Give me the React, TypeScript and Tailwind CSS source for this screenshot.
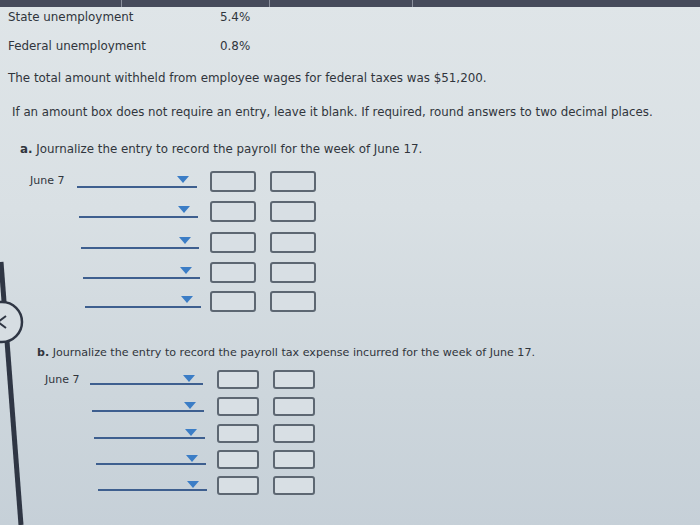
import React from "react";

const Tri = () => (
  <svg width="12" height="7" viewBox="0 0 12 7" className="block">
    <polygon points="0,0 12,0 6,7" fill="#3b7dc6" />
  </svg>
);

type RowProps = {
  label?: string;
  lineStart: number;
  lineWidth: number;
  boxStart: number;
  boxW: number;
  boxH: number;
  gap: number;
  lineH: number;
  rowH: number;
};

function Row({ label, lineStart, lineWidth, boxStart, boxW, boxH, gap, lineH, rowH }: RowProps) {
  return (
    <div className="flex items-start" style={{ height: rowH }}>
      <div className="flex items-start shrink-0" style={{ width: boxStart }}>
        <div className="shrink-0 pt-[3px] whitespace-nowrap" style={{ width: lineStart }}>
          {label}
        </div>
        <div
          className="flex justify-end items-start pr-[8px] pt-[5px] border-b-2 border-[#3e5f8f] shrink-0"
          style={{ width: lineWidth, height: lineH }}
        >
          <Tri />
        </div>
      </div>
      <div
        className="shrink-0 rounded-[3px] border-2 border-[#5d6772] bg-[#d8dfe4]"
        style={{ width: boxW, height: boxH }}
      />
      <div
        className="shrink-0 rounded-[3px] border-2 border-[#5d6772] bg-[#d8dfe4]"
        style={{ width: boxW, height: boxH, marginLeft: gap }}
      />
    </div>
  );
}

export default function App() {
  const rowsA = [
    { label: "June 7", lineStart: 47, lineWidth: 120, rowH: 30 },
    { lineStart: 49, lineWidth: 119, rowH: 31 },
    { lineStart: 51, lineWidth: 118, rowH: 30 },
    { lineStart: 53, lineWidth: 117, rowH: 29 },
    { lineStart: 55, lineWidth: 116, rowH: 30 },
  ];
  const rowsB = [
    { label: "June 7", lineStart: 45, lineWidth: 113, rowH: 27 },
    { lineStart: 47, lineWidth: 112, rowH: 27 },
    { lineStart: 49, lineWidth: 111, rowH: 26 },
    { lineStart: 51, lineWidth: 110, rowH: 26 },
    { lineStart: 53, lineWidth: 109, rowH: 26 },
  ];
  return (
    <div
      className="relative w-[700px] h-[525px] overflow-hidden text-[#30353c] bg-[linear-gradient(180deg,#dfe5e8_0%,#d9e0e4_40%,#cdd6dc_75%,#c6d0d8_100%)]"
      style={{ fontFamily: '"DejaVu Sans", Verdana, sans-serif' }}
    >
      {/* top monitor strip */}
      <div className="flex h-[7px] bg-[#464b5b]">
        <div className="w-[122px] border-r border-[#8a8f9c]" />
        <div className="w-[148px] border-r border-[#8a8f9c]" />
        <div className="w-[143px] border-r border-[#8a8f9c]" />
        <div className="flex-1" />
      </div>

      <div className="pl-[8px] text-[11.9px] leading-[16px]">
        <div className="flex mt-[2px]">
          <span className="w-[212px]">State unemployment</span>
          <span>5.4%</span>
        </div>
        <div className="flex mt-[13px]">
          <span className="w-[212px]">Federal unemployment</span>
          <span>0.8%</span>
        </div>
        <div className="mt-[16px]">The total amount withheld from employee wages for federal taxes was $51,200.</div>
      </div>
      <div className="pl-[12px] mt-[18px] text-[11.8px] leading-[16px]">
        If an amount box does not require an entry, leave it blank. If required, round answers to two decimal places.
      </div>

      <div className="pl-[20px] mt-[22px] text-[11.85px] leading-[15px]">
        <span className="font-bold">a.</span> Journalize the entry to record the payroll for the week of June 17.
      </div>
      <div className="pl-[30px] mt-[14px] text-[11px] leading-[14px]">
        {rowsA.map((r, i) => (
          <Row key={i} {...r} boxStart={180} boxW={46} boxH={21} gap={14} lineH={17} />
        ))}
      </div>

      <div className="pl-[37px] mt-[25px] text-[11.1px] leading-[14px]">
        <span className="font-bold">b.</span> Journalize the entry to record the payroll tax expense incurred for the week of June 17.
      </div>
      <div className="pl-[45px] mt-[10px] text-[11px] leading-[14px]">
        {rowsB.map((r, i) => (
          <Row key={i} {...r} boxStart={172} boxW={42} boxH={19} gap={14} lineH={15} />
        ))}
      </div>

      {/* screen edge and navigation circle (photo overlay) */}
      <svg className="absolute left-0 top-0 pointer-events-none" width="700" height="525" viewBox="0 0 700 525">
        <line x1="1" y1="262" x2="21" y2="525" stroke="#2f3644" strokeWidth="5" />
        <circle cx="2" cy="322" r="20" fill="#d6dde2" stroke="#2f3644" strokeWidth="2.5" />
        <polyline points="6,316 -2,322 6,328" fill="none" stroke="#2f3644" strokeWidth="2" />
      </svg>
    </div>
  );
}
